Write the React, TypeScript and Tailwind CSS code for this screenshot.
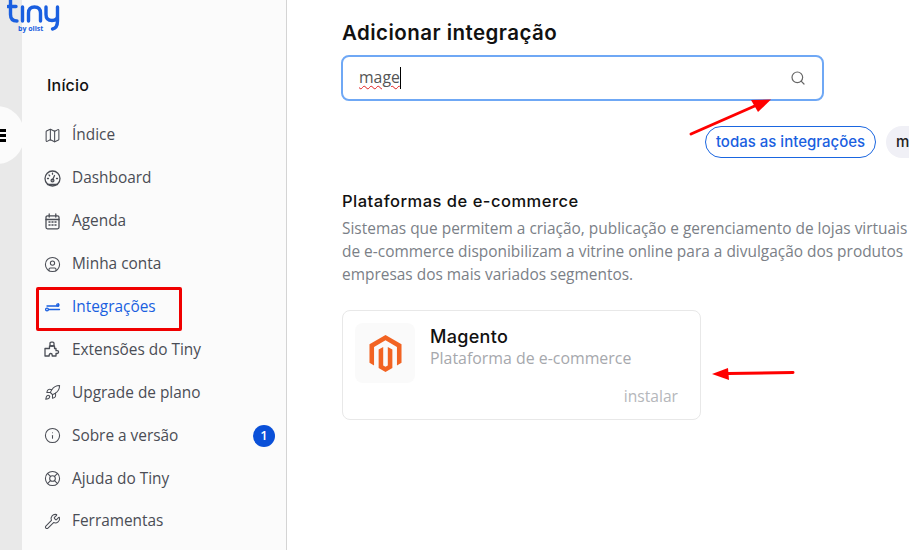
import React from "react";
import { Map, CircleUser, Rocket, Info, LifeBuoy, Wrench, Search } from "lucide-react";

const ic = { size: 17, strokeWidth: 1.5 };

function Gauge() {
  return (
    <svg width="17" height="17" viewBox="0 0 17 17" fill="none" stroke="currentColor" strokeWidth="1.3" strokeLinecap="round">
      <circle cx="8.5" cy="8.5" r="7.5" />
      <path d="M3.5 14.5h10M8.5 10l2-4.5M3.5 8.5h1M12.5 8.5h1M5 5l.7.7M8.5 3.2v1" />
      <circle cx="8.5" cy="10.5" r="1.4" />
    </svg>
  );
}
function Agenda() {
  return (
    <svg width="17" height="17" viewBox="0 0 17 17" fill="none" stroke="currentColor" strokeWidth="1.3" strokeLinecap="round">
      <rect x="2" y="2.8" width="13" height="13" rx="1.5" />
      <path d="M2 6.5h13M5.2 1v3M11.8 1v3" />
      <path d="M5 9h1M8 9h1M11 9h1M5 12h1M8 12h1M11 12h1" strokeWidth="1.5" />
    </svg>
  );
}
function Swap() {
  return (
    <svg width="17" height="17" viewBox="0 0 17 17" fill="none" stroke="currentColor" strokeWidth="1.3" strokeLinecap="round" strokeLinejoin="round">
      <path d="M3 7h11M14.5 5v2.2" />
      <circle cx="13.8" cy="6" r="1.1" />
      <path d="M15.5 10.5H4.5" />
      <circle cx="3" cy="10.5" r="1.4" />
    </svg>
  );
}
function Blocks() {
  return (
    <svg width="17" height="17" viewBox="0 0 17 17" fill="none" stroke="currentColor" strokeWidth="1.3" strokeLinejoin="round">
      <path d="M1 7.5h4.5V5h5v2.5H12v2.2h1.2a1.4 1.4 0 1 1 0 2.8H12V15H8.2v-1a1.5 1.5 0 1 0-3 0v1H1z" />
      <rect x="6" y="1.2" width="4" height="3.8" rx="1.2" />
    </svg>
  );
}

const items: [string, React.ReactNode][] = [
  ["Índice", <Map {...ic} />],
  ["Dashboard", <Gauge />],
  ["Agenda", <Agenda />],
  ["Minha conta", <CircleUser {...ic} />],
  ["Integrações", <Swap />],
  ["Extensões do Tiny", <Blocks />],
  ["Upgrade de plano", <Rocket {...ic} />],
  ["Sobre a versão", <Info {...ic} />],
  ["Ajuda do Tiny", <LifeBuoy {...ic} />],
  ["Ferramentas", <Wrench {...ic} />],
];

export default function App() {
  return (
    <div className="relative flex h-[550px] w-[909px] overflow-hidden bg-white font-['Open_Sans',sans-serif]">
      <div className="w-[22px] shrink-0 bg-[#e9e9e9]" />
      <aside className="w-[265px] shrink-0 border-r border-[#d4d4d4] bg-[#fbfbfb] pl-[22px]">
        <div className="mb-[20px] mt-[76px] pl-[3px] font-['Inter',sans-serif] text-[16px] font-medium leading-[18px] tracking-[0.2px] text-[#111]">Início</div>
        <nav className="flex flex-col">
          {items.map(([label, icon]) => {
            const active = label === "Integrações";
            return (
              <div key={label} className={`flex h-[42.9px] items-center gap-[11px] pr-[11px] ${active ? "text-[#1a5fe0]" : "text-[#4a4d55]"}`}>
                <span className="flex w-[17px] justify-center">{icon}</span>
                <span className="text-[15.4px] leading-[20px]">{label}</span>
                {label === "Sobre a versão" && (
                  <span className="ml-auto flex h-[22px] w-[22px] items-center justify-center rounded-full bg-[#0a50d8] text-[13px] font-semibold text-white">1</span>
                )}
              </div>
            );
          })}
        </nav>
      </aside>
      <main className="min-w-0 flex-1 pl-[55px] pt-[20px]">
        <h1 className="font-['Inter',sans-serif] text-[20.5px] font-semibold leading-[26px] tracking-[0.45px] text-[#111]">Adicionar integração</h1>
        <div className="mt-[9px] flex h-[46px] w-[483px] -translate-x-px items-center justify-between rounded-[8px] border-2 border-[#6fa8f5] pl-[16px] pr-[16px]">
          <span className="flex h-[22px] items-center border-r border-black text-[15.8px] text-[#555]">
            <span className="underline decoration-[#e02020] decoration-wavy decoration-1 underline-offset-2">mage</span>
          </span>
          <Search size={16} strokeWidth={1.8} className="text-[#666]" />
        </div>
        <div className="mt-[25px] flex gap-[10px] pl-[363px] font-['Inter',sans-serif] text-[15px] font-medium">
          <span className="flex h-[32px] w-[171px] shrink-0 items-center justify-center rounded-full border border-[#1a66e0] text-[#1a5fe0]">todas as integrações</span>
          <span className="flex h-[32px] w-[60px] shrink-0 items-center rounded-full bg-[#f0f0f6] pl-[10px] text-[#222]">m</span>
        </div>
        <h2 className="mt-[33px] font-['Inter',sans-serif] text-[16.5px] font-medium leading-[20px] tracking-[0.5px] text-[#111]">Plataformas de e-commerce</h2>
        <div className="mt-[6px] whitespace-nowrap text-[15.45px] leading-[23px] text-[#7b7f87]">
          <p>Sistemas que permitem a criação, publicação e gerenciamento de lojas virtuais</p>
          <p>de e-commerce disponibilizam a vitrine online para a divulgação dos produtos</p>
          <p>empresas dos mais variados segmentos.</p>
        </div>
        <div className="mt-[24px] h-[110px] w-[359px] rounded-[8px] border border-[#e8e8e8] p-[12px]">
          <div className="flex gap-[15px]">
            <div className="flex h-[60px] w-[60px] items-center justify-center rounded-[8px] bg-[#fafafa]">
              <svg width="37" height="37" viewBox="0 0 24 24" fill="#f26322">
                <path d="M12 24l-4.455-2.572v-12l2.97-1.715v12.001l1.485.902 1.485-.902V7.714l2.971 1.715v12L12 24zM22.391 6v12l-2.969 1.714V7.713L12 3.43 4.574 7.713v12.001L1.609 18V6L12 0l10.391 6z" />
              </svg>
            </div>
            <div className="pt-[3px]">
              <div className="font-['Inter',sans-serif] text-[18px] font-medium leading-[22px] tracking-[0.3px] text-[#111]">Magento</div>
              <div className="text-[15.9px] leading-[20px] text-[#a6a8ad]">Plataforma de e-commerce</div>
            </div>
          </div>
          <div className="mt-[3px] pr-[10px] text-right text-[15.6px] leading-[20px] text-[#b5b7bb]">instalar</div>
        </div>
      </main>

      {/* sidebar toggle */}
      <div className="absolute left-[-30px] top-[106px] flex h-[58px] w-[54px] items-center justify-end rounded-full bg-[#fbfbfb] pr-[18px]">
        <span className="flex w-[10px] flex-col gap-[2px]">
          <span className="h-[3px] bg-black" />
          <span className="h-[3px] bg-black" />
          <span className="h-[3px] bg-black" />
        </span>
      </div>

      {/* logo */}
      <div className="absolute left-[7px] top-0 w-[54px] text-[#1a5fe0]">
        <svg width="54" height="32" viewBox="0 0 54 32" fill="none" stroke="currentColor" strokeWidth="3.4" strokeLinecap="round" strokeLinejoin="round">
          <path d="M3.5 0v14.5q0 6.5 6.5 6.5M1 6.5h8" />
          <path d="M15.5 7v14" />
          <path d="M21.5 21v-8q0-6 6-6t6 6v8" />
          <path d="M39 7v7.5q0 6 6 6t5.5-6V7M50.5 13v8q0 7-5 8" />
        </svg>
        <span className="absolute left-[11px] top-[24px] whitespace-nowrap text-[7px] font-bold leading-[9px]">by olist</span>
      </div>

      {/* annotations */}
      <div className="absolute left-[36px] top-[287px] h-[44px] w-[146px] rounded-[2px] border-[3px] border-[#f00000]" />
      <svg className="absolute left-0 top-0" width="909" height="550" fill="none">
        <path d="M691 134L757 105" stroke="#f00" strokeWidth="3" strokeLinecap="round" />
        <path d="M771 99.5L751 100L758 112z" fill="#f00" />
        <path d="M793 372.5L728 373.5" stroke="#f00" strokeWidth="3" strokeLinecap="round" />
        <path d="M712 374L728 368L729 380z" fill="#f00" />
      </svg>
    </div>
  );
}
